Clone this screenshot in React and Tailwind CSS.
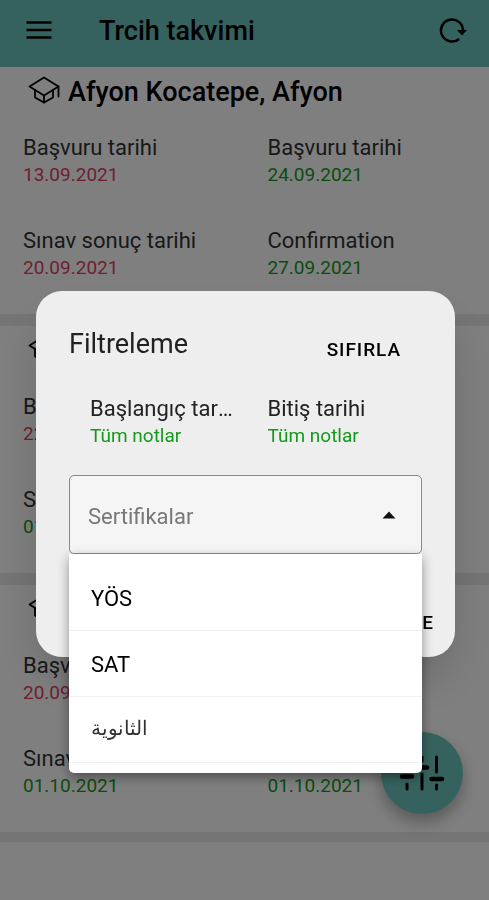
import React, { useState } from "react";

const schools = [
  {
    name: "Afyon Kocatepe, Afyon",
    dates: [
      { label: "Başvuru tarihi", value: "13.09.2021", past: true },
      { label: "Başvuru tarihi", value: "24.09.2021" },
      { label: "Sınav sonuç tarihi", value: "20.09.2021", past: true },
      { label: "Confirmation", value: "27.09.2021" },
    ],
  },
  {
    name: "Ege, İzmir",
    dates: [
      { label: "Başvuru tarihi", value: "22.09.2021", past: true },
      { label: "Başvuru tarihi", value: "27.09.2021" },
      { label: "Sınav sonuç tarihi", value: "01.10.2021" },
      { label: "Confirmation", value: "01.10.2021" },
    ],
  },
  {
    name: "Gazi, Ankara",
    dates: [
      { label: "Başvuru tarihi", value: "20.09.2021", past: true },
      { label: "Başvuru tarihi", value: "27.09.2021" },
      { label: "Sınav", value: "01.10.2021" },
      { label: "Confirmation", value: "01.10.2021" },
    ],
  },
];

const certificates = [
  { name: "YÖS" },
  { name: "SAT" },
  { name: "الثانوية", arabic: true },
];

const CapIcon = () => (
  <svg
    className="w-8 h-8 shrink-0"
    viewBox="0 0 32 32"
    fill="none"
    stroke="currentColor"
    strokeWidth={1.8}
    strokeLinejoin="round"
    strokeLinecap="round"
  >
    <path d="M16 1.5 L30.5 10.5 L16 19.5 L1.5 10.5 Z" />
    <path d="M7 14 V21.5 L16 26.5 L25 21.5 V14" />
    <path d="M16 19.5 V26.5" />
    <path d="M30.5 10.5 V20.5" />
  </svg>
);

const SchoolCard = ({ school }) => (
  <section className="bg-white pt-2 pb-[33px]">
    <h2 className="flex items-center gap-2 pl-7 h-[34px] text-[27px] font-medium">
      <CapIcon />
      <span className="truncate">{school.name}</span>
    </h2>
    <div className="grid grid-cols-2 gap-y-[39px] pt-[25px]">
      {school.dates.map((date, i) => (
        <div key={i} className="pl-[23px]">
          <p className="text-[22px] leading-7 text-[#333]">{date.label}</p>
          <p
            className={
              date.past
                ? "text-[19px] leading-[26px] text-[#e0405f]"
                : "text-[19px] leading-[26px] text-[#149a1c]"
            }
          >
            {date.value}
          </p>
        </div>
      ))}
    </div>
  </section>
);

const FilterDialog = () => {
  const [certificate, setCertificate] = useState("");

  return (
    <div
      role="dialog"
      aria-label="Filtreleme"
      className="w-full bg-[#eeeeee] rounded-[26px] shadow-2xl pt-[33px] pb-5"
    >
      <div className="flex items-start justify-between pl-[33px] pr-[54px]">
        <h2 className="text-[27px] leading-10 text-[#222]">Filtreleme</h2>
        <button className="mt-3 text-[19px] leading-7 font-medium tracking-wider">
          SIFIRLA
        </button>
      </div>

      {/* Date range */}
      <div className="grid grid-cols-2 px-8 pt-[31px]">
        <div className="pl-[22px] pr-3">
          <p className="text-[22px] leading-7 text-[#222] truncate">
            Başlangıç tarihi
          </p>
          <button className="text-[19px] leading-[26px] text-[#149a1c]">
            Tüm notlar
          </button>
        </div>
        <div className="pl-[22px]">
          <p className="text-[22px] leading-7 text-[#222] truncate">
            Bitiş tarihi
          </p>
          <button className="text-[19px] leading-[26px] text-[#149a1c]">
            Tüm notlar
          </button>
        </div>
      </div>

      {/* Certificate drop-down */}
      <div className="relative mx-[33px] mt-[26px]">
        <select
          aria-label="Sertifikalar"
          value={certificate}
          onChange={(e) => setCertificate(e.target.value)}
          className="block appearance-none w-full h-[79px] px-[18px] pt-1 rounded-[5px] border border-[#8a8a8a] bg-[#f5f5f5] text-[22px] text-[#777]"
        >
          <option value="">Sertifikalar</option>
          {certificates.map(({ name }) => (
            <option key={name}>{name}</option>
          ))}
        </select>
        <svg
          className="absolute right-[26px] top-9 w-[14px] h-[8px] pointer-events-none"
          viewBox="0 0 14 8"
        >
          <path d="M0.5 7.5 L7 0.5 L13.5 7.5 Z" fill="#111" />
        </svg>
        <ul className="absolute top-full inset-x-0 bg-white rounded-b-[5px] pt-[11px] pb-2.5 shadow-[0_4px_12px_rgba(0,0,0,0.4)]">
          {certificates.map(({ name, arabic }) => (
            <li key={name} className="h-[66px] border-b border-[#f0f0f0]">
              <button
                onClick={() => setCertificate(name)}
                className={
                  arabic
                    ? "w-full h-full px-[22px] pb-1 text-left text-[20px] text-[#333]"
                    : "w-full h-full px-[22px] pt-0.5 text-left text-[22px]"
                }
              >
                {name}
              </button>
            </li>
          ))}
        </ul>
      </div>

      <div className="flex justify-end pr-[21px] pt-[55px]">
        <button className="text-[19px] leading-7 font-medium tracking-wider">
          FILTRELE
        </button>
      </div>
    </div>
  );
};

const App = () => {
  return (
    <div className="min-h-screen bg-white text-black font-[Roboto,sans-serif]">
      <header className="flex items-center h-[67px] pb-1 pl-[26px] pr-[22px] bg-[#6bc5be]">
        <button aria-label="Menu">
          <svg className="w-[26px] h-6" viewBox="0 0 26 24" stroke="currentColor" strokeWidth={2.6}>
            <path d="M0.5 2.5 H25.5 M0.5 10 H25.5 M0.5 17.5 H25.5" />
          </svg>
        </button>
        <h1 className="flex-1 pl-[47px] text-[27px] font-medium">
          Trcih takvimi
        </h1>
        <button aria-label="Yenile">
          <svg className="w-7 h-7" viewBox="0 0 28 28" fill="none">
            <path
              d="M20.1 20.9 A11 11 0 1 1 24 13"
              stroke="currentColor"
              strokeWidth={2.6}
            />
            <path d="M18 12 H28 L23 17.5 Z" fill="currentColor" />
          </svg>
        </button>
      </header>

      {/* School list */}
      <main className="flex flex-col gap-3 pb-2.5 bg-[#eaeaea]">
        {schools.map((school) => (
          <SchoolCard key={school.name} school={school} />
        ))}
      </main>

      <button
        aria-label="Filtrele"
        className="fixed right-[26px] bottom-[86px] w-[82px] h-[82px] rounded-full bg-[#6bc5be] shadow-[0_8px_16px_rgba(0,0,0,0.3)] flex items-center justify-center"
      >
        <svg
          className="w-12 h-12"
          viewBox="0 0 48 48"
          fill="none"
          stroke="currentColor"
          strokeLinecap="round"
        >
          <path
            strokeWidth={3}
            d="M9 8 V22 M9 35 V40 M24 8 V12 M24 25 V40 M38.5 8 V23 M38.5 36 V40"
          />
          <path strokeWidth={4.5} d="M4 27.5 H14 M19 18.5 H29 M33.5 30 H44" />
        </svg>
      </button>

      {/* Backdrop and dialog */}
      <div className="fixed inset-0 flex items-center justify-center pt-12 pl-9 pr-[34px] bg-black/50">
        <FilterDialog />
      </div>
    </div>
  );
};

export default App;
